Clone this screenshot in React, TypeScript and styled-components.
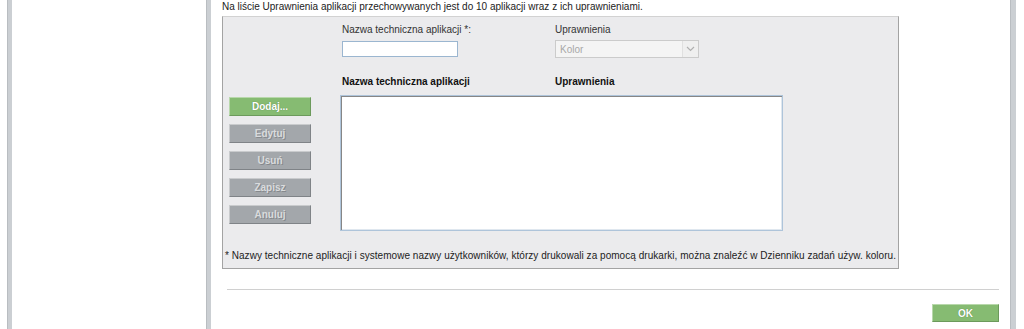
import React from "react";
import styled, { createGlobalStyle } from "styled-components";

const GlobalStyle = createGlobalStyle`
  html, body {
    margin: 0;
    padding: 0;
    background: #ffffff;
  }
  body {
    font-family: "Liberation Sans", Arial, sans-serif;
    font-size: 10px;
    color: #222;
  }
`;

const Page = styled.div`
  display: flex;
  height: 329px;
  overflow: hidden;
`;

const Gutter = styled.div<{ $w: number }>`
  width: ${p => p.$w}px;
  flex: none;
  background: #fff;
`;

const SideBar = styled.div<{ $w: number }>`
  width: ${p => p.$w}px;
  flex: none;
  background: #cbcfd3;
  border-left: 1px solid #b9bdc1;
  box-sizing: border-box;
`;

const Main = styled.div`
  width: 799px;
  flex: none;
  padding: 0 0 0 11px;
  box-sizing: border-box;
`;

const Intro = styled.p`
  margin: 1px 0 0;
  height: 15px;
  line-height: 12px;
  color: #222;
`;

const Panel = styled.div`
  width: 677px;
  height: 253px;
  box-sizing: border-box;
  background: #ebebed;
  border: 1px solid #a3a3a3;
  border-top-color: #d2d2d2;
  display: flex;
  flex-direction: column;
`;

const FieldRow = styled.div`
  display: flex;
  padding-left: 119px;
  margin-top: 7px;
`;

const Field = styled.div<{ $w: number }>`
  width: ${p => p.$w}px;
  display: flex;
  flex-direction: column;
`;

const Label = styled.label<{ $bold?: boolean }>`
  line-height: 12px;
  height: 12px;
  font-weight: ${p => (p.$bold ? "bold" : "normal")};
  color: ${p => (p.$bold ? "#111" : "#333")};
`;

const TextInput = styled.input`
  margin-top: 5px;
  width: 116px;
  height: 16px;
  box-sizing: border-box;
  border: 1px solid #9bb6d0;
  background: #fff;
  padding: 0 2px;
  font: inherit;
  outline: none;
`;

const Select = styled.div`
  margin-top: 4px;
  width: 144px;
  height: 18px;
  box-sizing: border-box;
  border: 1px solid #cbcbcb;
  background: #f4f4f4;
  display: flex;
  align-items: center;
  color: #a8a8a8;
`;

const SelectText = styled.span`
  flex: 1;
  padding-left: 4px;
`;

const SelectArrow = styled.span`
  width: 15px;
  height: 16px;
  border-left: 1px solid #e0e0e0;
  background: #efefef;
  display: flex;
  align-items: center;
  justify-content: center;
`;

const HeaderRow = styled(FieldRow)`
  margin-top: 18px;
`;

const Body = styled.div`
  display: flex;
  margin-top: 7px;
`;

const Buttons = styled.div`
  width: 117px;
  padding: 2px 0 0 6px;
  box-sizing: border-box;
  display: flex;
  flex-direction: column;
  gap: 8px;
`;

const Button = styled.button<{ $primary?: boolean }>`
  width: 82px;
  height: 19px;
  padding: 0;
  box-sizing: border-box;
  font-family: "Liberation Sans", Arial, sans-serif;
  font-size: 10px;
  font-weight: bold;
  cursor: pointer;
  background: ${p => (p.$primary ? "#86bb72" : "#a3a7ab")};
  color: ${p => (p.$primary ? "#ffffff" : "#d9dbdd")};
  border: 1px solid;
  border-color: ${p =>
    p.$primary
      ? "#b8d8ab #6c9a5c #6c9a5c #b8d8ab"
      : "#c9cbcd #7f8387 #7f8387 #c9cbcd"};
  text-shadow: ${p =>
    p.$primary ? "0 0 1px #4f7a42" : "1px 1px 0 #85898d"};
`;

const ListBox = styled.div`
  width: 443px;
  height: 136px;
  box-sizing: border-box;
  background: #fff;
  border: 1px solid #aec4da;
  box-shadow: inset 1px 1px 0 #868686, inset -1px -1px 0 #dfe7ef;
`;

const Footnote = styled.p`
  margin: auto 0 6px 2px;
  line-height: 12px;
  letter-spacing: 0.04px;
  color: #222;
`;

const Divider = styled.hr`
  width: 772px;
  margin: 20px 0 0 5px;
  border: none;
  border-top: 1px solid #d0d0d0;
  height: 0;
`;

const Footer = styled.div`
  width: 777px;
  display: flex;
  justify-content: flex-end;
  margin-top: 14px;
`;

const OkButton = styled(Button)`
  width: 67px;
  height: 18px;
`;

const Chevron = () => (
  <svg width="9" height="6" viewBox="0 0 9 6">
    <path d="M1 1 L4.5 4.5 L8 1" fill="none" stroke="#b0b0b0" strokeWidth="1.2" />
  </svg>
);

const actions = ["Edytuj", "Usuń", "Zapisz", "Anuluj"];

export default function App() {
  return (
    <>
      <GlobalStyle />
      <Page>
        <Gutter $w={7} />
        <SideBar $w={5} />
        <Gutter $w={194} />
        <SideBar $w={5} />
        <Main>
          <Intro>
            Na liście Uprawnienia aplikacji przechowywanych jest do 10 aplikacji wraz z ich uprawnieniami.
          </Intro>
          <Panel>
            <FieldRow>
              <Field $w={213}>
                <Label>Nazwa techniczna aplikacji *:</Label>
                <TextInput type="text" />
              </Field>
              <Field $w={150}>
                <Label>Uprawnienia</Label>
                <Select>
                  <SelectText>Kolor</SelectText>
                  <SelectArrow>
                    <Chevron />
                  </SelectArrow>
                </Select>
              </Field>
            </FieldRow>
            <HeaderRow>
              <Field $w={213}>
                <Label $bold>Nazwa techniczna aplikacji</Label>
              </Field>
              <Field $w={150}>
                <Label $bold>Uprawnienia</Label>
              </Field>
            </HeaderRow>
            <Body>
              <Buttons>
                <Button $primary>Dodaj...</Button>
                {actions.map(a => (
                  <Button key={a} disabled>
                    {a}
                  </Button>
                ))}
              </Buttons>
              <ListBox />
            </Body>
            <Footnote>
              * Nazwy techniczne aplikacji i systemowe nazwy użytkowników, którzy drukowali za pomocą drukarki, można znaleźć w Dzienniku zadań używ. koloru.
            </Footnote>
          </Panel>
          <Divider />
          <Footer>
            <OkButton $primary>OK</OkButton>
          </Footer>
        </Main>
        <SideBar $w={6} />
        <Gutter $w={7} />
      </Page>
    </>
  );
}
